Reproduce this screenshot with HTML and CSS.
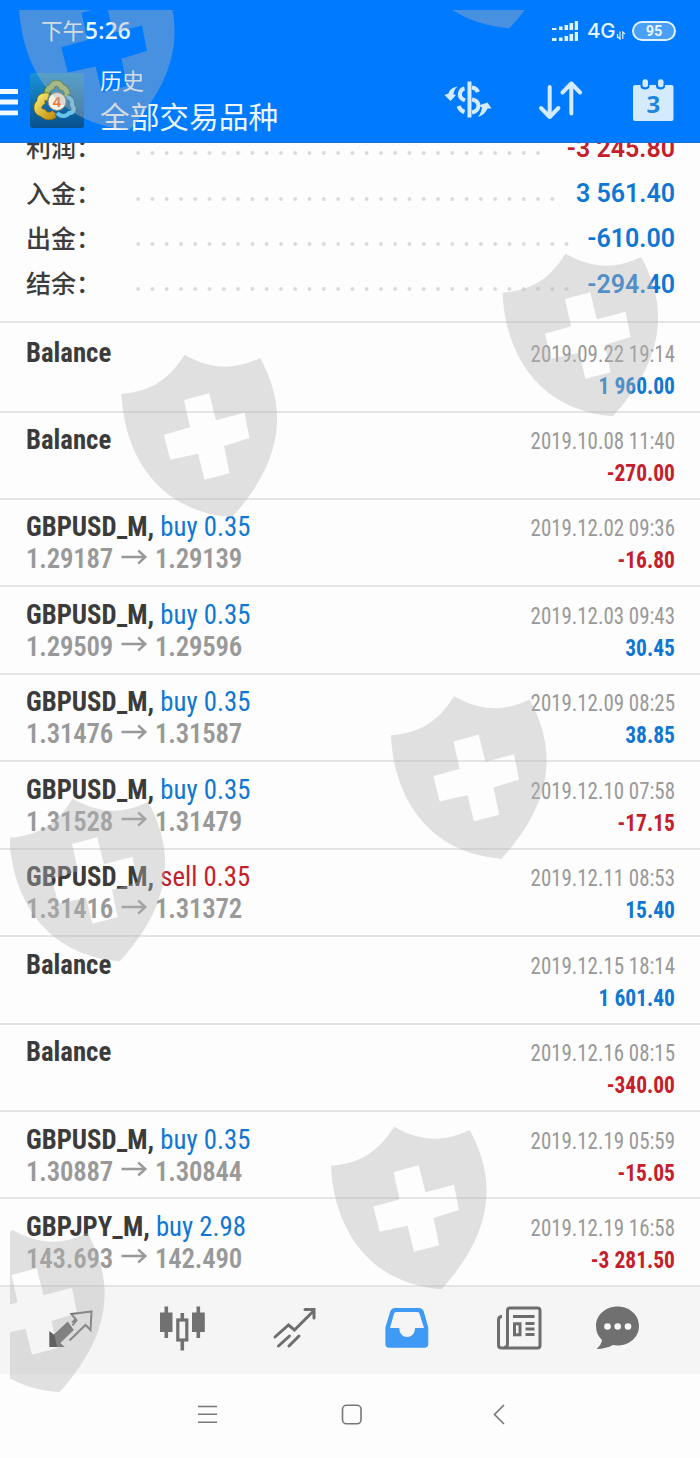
FILE: index.html
```html
<!DOCTYPE html>
<html lang="zh-CN">
<head>
<meta charset="utf-8">
<title>历史</title>
<link rel="stylesheet" href="styles.css">
</head>
<body>
<div class="screen">
  <header class="header">
    <div class="status">
      <div class="clock">下午<span class="clock-digits">5:26</span></div>
      <div class="signals">
        <svg class="signal" viewBox="552 20 28 22" fill="#dff2ff">
          <path d="M553 28h4.500v2h-4.500zM560 26.500h3.600v3.500h-3.600zM565.500 25h3.600v5h-3.600zM570.500 23h3.600v7h-3.600zM575.800 21h3.200v9h-3.200zM553 38h4.500v3h-4.500zM560 37.500h3.600v3.500h-3.600zM565.500 36h3.600v5h-3.600zM570.500 34h3.600v7h-3.600zM575.800 32h3.200v9h-3.200z"/>
        </svg>
        <span class="net">4G</span>
        <svg class="updown" viewBox="617 30 10 10" fill="none" stroke="#dff2ff" stroke-width="1.200"><path d="M618.500 34v4M621 31.500V39l-2-2M623.800 39v-7l2.200 2"/></svg>
        <span class="battery">95</span>
      </div>
    </div>
    <div class="toolbar">
      <svg class="menu" viewBox="0 73 18 54" fill="#f1faff"><path d="M0 89h18v5H0zM0 99.600h18v5H0zM0 110.500h18v4.800H0z"/></svg>
      <svg class="logo" viewBox="30 73 54 55">
        <defs>
          <linearGradient id="tile" x1="0" y1="0" x2="0" y2="1"><stop offset="0" stop-color="#1993d8"/><stop offset="1" stop-color="#08508d"/></linearGradient>
          <linearGradient id="gold" x1="0" y1="0" x2="1" y2="1"><stop offset="0" stop-color="#f2e56b"/><stop offset="1" stop-color="#c28f12"/></linearGradient>
        </defs>
        <rect x="30" y="73" width="54" height="55" rx="3" fill="url(#tile)"/>
        <path d="M47 97c-1-6 1-9 4.500-10 2-5 8-5 10 0 4 1 6.500 5 5.500 10" fill="none" stroke="#39702c" stroke-width="7"/>
        <path d="M47 97c-1-6 1-9 4.500-10 2-5 8-5 10 0 4 1 6.500 5 5.500 10" fill="none" stroke="#9dbb6c" stroke-width="5"/>
        <path d="M48 97c-5-1-8 1-7 5-5 4-4 10 2 11 3 4 9 4 12 0" fill="none" stroke="#7f6510" stroke-width="8.500"/>
        <path d="M48 97c-5-1-8 1-7 5-5 4-4 10 2 11 3 4 9 4 12 0" fill="none" stroke="url(#gold)" stroke-width="7"/>
        <path d="M67 97c4 1 6 4 5 8 3 4 2 8-3 8-3 4-8 4-12 0" fill="none" stroke="#145d9c" stroke-width="6.500"/>
        <path d="M67 97c4 1 6 4 5 8 3 4 2 8-3 8-3 4-8 4-12 0" fill="none" stroke="#66c4ee" stroke-width="4"/>
        <circle cx="57" cy="101.500" r="9" fill="#f7f2e8" stroke="#8e8672" stroke-width="1"/>
        <text class="logo-four" x="57" y="107" text-anchor="middle">4</text>
      </svg>
      <div class="titles">
        <div class="title-small">历史</div>
        <div class="title-main">全部交易品种</div>
      </div>
      <svg class="actions" viewBox="440 73 240 54">
        <g fill="none" stroke="#d4eafd" stroke-width="4">
          <path d="M464.500 88.500c-5 1-6.500 8.500-1.500 11l2 1M472 87.500c3 .300 5 1.800 6 4.500M472 99.500c8.500 1.500 8.500 11 0 13M458.500 106c1 3 3 5 6 6"/>
          <path d="M469.500 81.500v36"/>
        </g>
        <g fill="#d4eafd">
          <path d="M444.500 95l4-1.500c1-4 4-6 9-7-3 3-4 5-4 8l2.500.500-5.500 6z"/>
          <path d="M491.500 108.500l-4-6-9 3 3.500 2c-.500 4-2 7-4 9.500 5-1.500 8-5 9.500-8.500z"/>
        </g>
        <g fill="none" stroke="#d4eafd" stroke-width="4" stroke-linecap="round" stroke-linejoin="round">
          <path d="M549.700 87v30M541 108l8.700 9 8.700-9M571.300 113.500V83.500M562.500 92.500l8.800-9 8.800 9"/>
        </g>
        <path d="M635 85h5.500v1.500c0 4 9 4 9 0V85h6.500v1.500c0 4 9 4 9 0V85h6.500a2 2 0 0 1 2 2v32a2 2 0 0 1-2 2H635a2 2 0 0 1-2-2V87a2 2 0 0 1 2-2z" fill="#d4eafd"/>
        <rect x="642.500" y="79.300" width="5.500" height="8" rx="2.500" fill="#d4eafd"/>
        <rect x="658" y="79.300" width="5.500" height="8" rx="2.500" fill="#d4eafd"/>
        <text class="cal-day" x="653.300" y="112.700" text-anchor="middle">3</text>
      </svg>
    </div>
  </header>

  <section class="summary">
    <div class="sum"><span class="sum-label">利润：</span><i class="dots dots-29"></i><b class="sum-value neg">-3 245.80</b></div>
    <div class="sum"><span class="sum-label">入金：</span><i class="dots dots-30"></i><b class="sum-value pos">3 561.40</b></div>
    <div class="sum"><span class="sum-label">出金：</span><i class="dots dots-31"></i><b class="sum-value pos">-610.00</b></div>
    <div class="sum"><span class="sum-label">结余：</span><i class="dots dots-31"></i><b class="sum-value pos">-294.40</b></div>
  </section>

  <main class="deals">
    <div class="deal first"><div class="left"><div class="name"><b>Balance</b></div></div><div class="right"><div class="date">2019.09.22 19:14</div><div class="sum-deal pos">1 960.00</div></div></div>
    <div class="deal"><div class="left"><div class="name"><b>Balance</b></div></div><div class="right"><div class="date">2019.10.08 11:40</div><div class="sum-deal neg">-270.00</div></div></div>
    <div class="deal"><div class="left"><div class="name"><b>GBPUSD_M,</b> <span class="pos">buy 0.35</span></div><div class="price">1.29187<svg class="arrow" viewBox="0 0 28 16"><path d="M1 8h25M18.500 1.500L26 8l-7.500 6.500"/></svg>1.29139</div></div><div class="right"><div class="date">2019.12.02 09:36</div><div class="sum-deal neg">-16.80</div></div></div>
    <div class="deal"><div class="left"><div class="name"><b>GBPUSD_M,</b> <span class="pos">buy 0.35</span></div><div class="price">1.29509<svg class="arrow" viewBox="0 0 28 16"><path d="M1 8h25M18.500 1.500L26 8l-7.500 6.500"/></svg>1.29596</div></div><div class="right"><div class="date">2019.12.03 09:43</div><div class="sum-deal pos">30.45</div></div></div>
    <div class="deal"><div class="left"><div class="name"><b>GBPUSD_M,</b> <span class="pos">buy 0.35</span></div><div class="price">1.31476<svg class="arrow" viewBox="0 0 28 16"><path d="M1 8h25M18.500 1.500L26 8l-7.500 6.500"/></svg>1.31587</div></div><div class="right"><div class="date">2019.12.09 08:25</div><div class="sum-deal pos">38.85</div></div></div>
    <div class="deal"><div class="left"><div class="name"><b>GBPUSD_M,</b> <span class="pos">buy 0.35</span></div><div class="price">1.31528<svg class="arrow" viewBox="0 0 28 16"><path d="M1 8h25M18.500 1.500L26 8l-7.500 6.500"/></svg>1.31479</div></div><div class="right"><div class="date">2019.12.10 07:58</div><div class="sum-deal neg">-17.15</div></div></div>
    <div class="deal"><div class="left"><div class="name"><b>GBPUSD_M,</b> <span class="neg">sell 0.35</span></div><div class="price">1.31416<svg class="arrow" viewBox="0 0 28 16"><path d="M1 8h25M18.500 1.500L26 8l-7.500 6.500"/></svg>1.31372</div></div><div class="right"><div class="date">2019.12.11 08:53</div><div class="sum-deal pos">15.40</div></div></div>
    <div class="deal"><div class="left"><div class="name"><b>Balance</b></div></div><div class="right"><div class="date">2019.12.15 18:14</div><div class="sum-deal pos">1 601.40</div></div></div>
    <div class="deal"><div class="left"><div class="name"><b>Balance</b></div></div><div class="right"><div class="date">2019.12.16 08:15</div><div class="sum-deal neg">-340.00</div></div></div>
    <div class="deal"><div class="left"><div class="name"><b>GBPUSD_M,</b> <span class="pos">buy 0.35</span></div><div class="price">1.30887<svg class="arrow" viewBox="0 0 28 16"><path d="M1 8h25M18.500 1.500L26 8l-7.500 6.500"/></svg>1.30844</div></div><div class="right"><div class="date">2019.12.19 05:59</div><div class="sum-deal neg">-15.05</div></div></div>
    <div class="deal"><div class="left"><div class="name"><b>GBPJPY_M,</b> <span class="pos">buy 2.98</span></div><div class="price">143.693<svg class="arrow" viewBox="0 0 28 16"><path d="M1 8h25M18.500 1.500L26 8l-7.500 6.500"/></svg>142.490</div></div><div class="right"><div class="date">2019.12.19 16:58</div><div class="sum-deal neg">-3 281.50</div></div></div>
  </main>

  <nav class="tabs">
    <svg class="tab" viewBox="14 1287 112 87">
      <path d="M49.300 1331v16h15.500l-4.500-4 13.500-13-6-8.500-14 13z" fill="#606060"/>
      <path d="M72.500 1325.500l4-5-5-6.500 20-2.500-1 18.500-5-5-16 15.500M72 1322.500l4.500-4" fill="none" stroke="#6c6c6c" stroke-width="2"/>
    </svg>
    <svg class="tab" viewBox="126 1287 112 87">
      <path d="M164.500 1306.500h3.600v6h4.400v19.500h-4.400v6h-3.600v-6h-4.500v-19.500h4.500zM196.500 1306.500h3.600v6h4.700v19.500h-4.700v6h-3.600v-6H192v-19.500h4.500z" fill="#717171"/>
      <path d="M182.300 1313v6M182.300 1341v9.500" stroke="#717171" stroke-width="3.600"/>
      <rect x="177.800" y="1320" width="9" height="20" fill="none" stroke="#717171" stroke-width="3.200"/>
    </svg>
    <svg class="tab" viewBox="238 1287 112 87">
      <path d="M275 1337l13.500-12 6 5 19-19M305 1309.500h9v8.500M278.500 1346l11-10M289 1346l10-10" fill="none" stroke="#6e6e6e" stroke-width="3" stroke-linecap="round"/>
    </svg>
    <svg class="tab" viewBox="350 1287 112 87">
      <path fill-rule="evenodd" d="M395 1308h24q3.500 0 4.800 3.500l4.500 16V1344q0 3.700-3.700 3.700h-35.500q-3.700 0-3.700-3.700v-16.500l4.800-16q1.300-3.500 4.800-3.500zM396 1312q-1.500 0-2 1.500l-4 14.500h9.300c0 12 15.700 12 15.700 0h9l-4.500-14.500q-.500-1.500-2-1.500z" fill="#3f9af5"/>
    </svg>
    <svg class="tab" viewBox="462 1287 112 87">
      <path d="M507.500 1312.500v-2q0-2.500 2.500-2.500h27.500q2.500 0 2.500 2.500v35q0 2.500-2.500 2.500h-36q-3 0-3-3v-25q0-3.500 3.500-3.500M507.500 1312v32q0 3.500-3.500 3.500" fill="none" stroke="#6d6d6d" stroke-width="3"/>
      <path d="M513 1316.500h21.500M525.500 1323.500h9M525.500 1329h9M525.500 1334.500h9" stroke="#6d6d6d" stroke-width="2.800"/>
      <rect x="514.500" y="1323.800" width="5.500" height="11" fill="none" stroke="#6d6d6d" stroke-width="3"/>
    </svg>
    <svg class="tab" viewBox="574 1287 112 87">
      <path d="M617.500 1306.500c12 0 21.500 8.500 21.500 19.500s-9.500 19.500-21.500 19.500c-1.500 0-3-.200-4.500-.500-4.500 2.500-10 3.800-16.500 4 3-2.500 5-5.500 5.500-9-4-3.500-6-8.500-6-14 0-11 9.500-19.500 21.500-19.500z" fill="#707070"/>
      <g fill="#f7f7f7"><circle cx="607.500" cy="1326.500" r="3.300"/><circle cx="617.700" cy="1326.500" r="3.300"/><circle cx="628" cy="1326.500" r="3.300"/></g>
    </svg>
  </nav>
  <footer class="sysnav">
    <svg class="sysicons" viewBox="190 1400 330 30" fill="none" stroke="#777" stroke-width="1.600">
      <path d="M198 1406.500h19M198 1414.300h19M198 1422.300h19"/>
      <rect x="342.500" y="1405.300" width="18.500" height="18.500" rx="4"/>
      <path d="M504 1405l-9.500 9.500 9.500 9.500"/>
    </svg>
  </footer>

  <svg class="watermark" viewBox="0 0 700 1458">
    <defs>
      <clipPath id="area"><path d="M10 10h690v1448H10z"/></clipPath>
      <path id="shield" transform="scale(1.008)" fill-rule="evenodd" d="M0 39.500C28 37 46 27 62.500.700 90 16 112 16 137.500 4 160 45 168 98 109.500 162 28 155 2 90 0 39.500zM62 45.700l6 27-26 7.300 6.300 25 27.700-6 6.300 25.700 25-6.400-5.600-27 25.300-8-5-25-28.300 7.400L87 39z"/>
    </defs>
    <g clip-path="url(#area)" fill="#b4b4b4" fill-opacity=".4">
      <use href="#shield" x="19" y="-33.300"/>
      <use href="#shield" x="399" y="-135"/>
      <use href="#shield" x="502.500" y="253"/>
      <use href="#shield" x="121.500" y="354"/>
      <use href="#shield" x="391" y="695.500"/>
      <use href="#shield" x="9.500" y="798"/>
      <use href="#shield" x="331" y="1126"/>
      <use href="#shield" x="-51" y="1229"/>
    </g>
  </svg>
</div>
</body>
</html>
```
FILE: styles.css
```css
* { box-sizing: border-box; }
body { margin: 0; background: #fdfdfd; font-family: Roboto, "Noto Sans CJK SC", sans-serif; }
.screen { position: relative; width: 700px; height: 1458px; overflow: hidden; display: flex; flex-direction: column; }
svg { display: block; flex: none; }

.header { height: 143px; flex: none; background: #007aff; border-bottom: 1px solid #1671cf; color: #eaf7ff; }
.status { height: 61px; display: flex; justify-content: space-between; padding: 0 24px 0 41px; align-items: center; }
.clock { font: 21.5px/61px "Noto Sans CJK SC", sans-serif; display: flex; }
.clock-digits { font: 600 22.500px/63px "Open Sans", sans-serif; letter-spacing: .3px; margin-left: 1px; }
.signals { display: flex; align-items: center; }
.signal { width: 28px; height: 22px; }
.net { font: 500 20.500px/22px Inter, sans-serif; margin-left: 8px; width: 28px; letter-spacing: -.3px; }
.updown { width: 10px; height: 10px; margin: 8px 6px 0 1px; }
.battery { width: 44px; height: 20px; border: 2px solid #dff2ff; border-radius: 10px; background: #4aa0f8; font: 700 14.500px/17px Roboto, sans-serif; text-align: center; }
.toolbar { display: flex; height: 78px; padding: 12px 20px 0 0; }
.menu { width: 18px; height: 54px; }
.logo { width: 54px; height: 55px; margin-left: 12px; }
.logo-four { font: 700 15px "Liberation Sans", sans-serif; fill: #e27a3c; }
.titles { margin: -8px 0 0 16px; width: 340px; font-family: "Noto Sans CJK SC", sans-serif; white-space: nowrap; }
.title-small { font-size: 22px; line-height: 29px; }
.title-main { font-size: 29.700px; line-height: 43px; }
.actions { width: 240px; height: 54px; }
.cal-day { font: 700 24px "Open Sans", sans-serif; fill: #1f83e0; }

.summary { height: 180px; flex: none; overflow: hidden; padding: 0 25px 0 26px; }
.sum { height: 45.400px; display: flex; align-items: center; }
.sum:first-child { margin-top: -17px; }
.sum-label { width: 105px; margin-top: -5px; font: 500 25px/40px "Noto Sans CJK SC", sans-serif; color: #3c3c3c; white-space: nowrap; }
.dots { height: 6px; margin-top: 9px; background: radial-gradient(circle at 7.143px 3px, #dadada 1.500px, transparent 2.300px) 0 0 / 14.286px 6px repeat-x; }
.dots-29 { width: 414.300px; }
.dots-30 { width: 428.600px; }
.dots-31 { width: 442.900px; }
.sum-value { margin-left: auto; font: 600 25px/40px Roboto, sans-serif; white-space: nowrap; }
.pos { color: #0f77d3; }
.neg { color: #c4202c; }

.deals { border-top: 2px solid #e4e4e4; margin-top: -2px; font-family: "Roboto Condensed", Roboto, sans-serif; font-stretch: 75%; flex: none; }
.deal { height: 87.450px; border-bottom: 2px solid #e4e4e4; display: flex; justify-content: space-between; padding: 11.500px 25px 0 26px; white-space: nowrap; }
.deal.first { height: 89.500px; padding-top: 14px; }
.left { transform: scaleX(.955); transform-origin: 0 0; }
.name { font-size: 28px; line-height: 32px; color: #3b3b3b; }
.price { font-size: 28px; line-height: 31px; font-weight: 600; color: #999; display: flex; align-items: center; letter-spacing: -.2px; }
.arrow { width: 30px; height: 16px; margin: -4px 7px 0; fill: none; stroke: #999; stroke-width: 2.400; }
.right { text-align: right; }
.date { font-size: 24px; line-height: 35px; color: #999; transform: scaleX(.87); transform-origin: 100% 0; }
.sum-deal { font-size: 24px; line-height: 28px; font-weight: 700; transform: scaleX(.895); transform-origin: 100% 0; }

.tabs { height: 87px; flex: none; background: #f5f5f5; display: flex; padding: 0 0 0 14px; }
.tab { width: 112px; height: 87px; }
.sysnav { flex: 1; display: flex; padding: 26px 0 0 190px; }
.sysicons { width: 330px; height: 30px; }

.watermark { position: absolute; left: 0; top: 0; width: 700px; height: 1458px; pointer-events: none; }
```
